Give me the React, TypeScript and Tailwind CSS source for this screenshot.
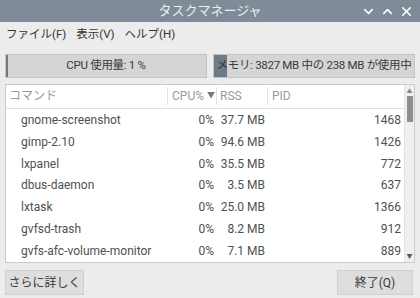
import { ChevronDown, ChevronUp, X } from 'lucide-react';

const rows = [
  { cmd: 'gnome-screenshot', cpu: '0%', rss: '37.7 MB', pid: '1468' },
  { cmd: 'gimp-2.10', cpu: '0%', rss: '94.6 MB', pid: '1426' },
  { cmd: 'lxpanel', cpu: '0%', rss: '35.5 MB', pid: '772' },
  { cmd: 'dbus-daemon', cpu: '0%', rss: '3.5 MB', pid: '637' },
  { cmd: 'lxtask', cpu: '0%', rss: '25.0 MB', pid: '1366' },
  { cmd: 'gvfsd-trash', cpu: '0%', rss: '8.2 MB', pid: '912' },
  { cmd: 'gvfs-afc-volume-monitor', cpu: '0%', rss: '7.1 MB', pid: '889' },
];

const font = { fontFamily: 'Roboto, "Noto Sans CJK JP", sans-serif' };

const UsageBar = ({ label, percent }: { label: string; percent: number }) => (
  <div className="relative flex-1 min-w-0 h-[24px] border border-[#c4c4c4] bg-[#d5d5d5] flex items-center justify-center overflow-hidden">
    <div className="absolute left-0 top-0 bottom-0 bg-[#6d7a88]" style={{ width: `${percent}%` }} />
    <span className="relative text-[11.5px] text-[#3a3a3a] whitespace-nowrap tracking-[-0.3px]">{label}</span>
  </div>
);

export default function App() {
  return (
    <div className="w-[420px] h-[298px] bg-[#ececec] flex flex-col overflow-hidden" style={font}>
      <div className="h-[22px] bg-[#7f8b98] flex items-center relative">
        <span className="flex-1 text-center text-[13px] text-white/85 whitespace-nowrap">タスクマネージャ</span>
        <div className="absolute right-[6px] top-0 h-full flex items-center gap-[4px] text-white">
          <ChevronDown size={15} strokeWidth={2.5} />
          <ChevronUp size={15} strokeWidth={2.5} />
          <X size={15} strokeWidth={2.5} />
        </div>
      </div>
      <div className="h-[24px] pt-[2px] flex items-center gap-[10px] px-[6px] text-[11.5px] text-[#333] whitespace-nowrap">
        <span>ファイル(F)</span>
        <span>表示(V)</span>
        <span>ヘルプ(H)</span>
      </div>
      <div className="flex flex-col px-[5px] pt-[8px] flex-1">
        <div className="flex gap-[6px]">
          <UsageBar label="CPU 使用量: 1 %" percent={1} />
          <UsageBar label="メモリ: 3827 MB 中の 238 MB が使用中" percent={6.5} />
        </div>
        <div className="mt-[6px] h-[179px] border border-[#cbcbcb] bg-white flex">
          <div className="flex-1 flex flex-col text-[12px] whitespace-nowrap">
            <div className="h-[24px] grid grid-cols-[162px_49px_51px_1fr] items-center border-b border-[#e2e2e2] text-[#9a9a9a]">
              <span className="pl-[3px] border-r border-[#e2e2e2]">コマンド</span>
              <span className="pl-[4px] border-r border-[#e2e2e2] flex items-center gap-[3px]">
                CPU%<span className="text-[8px] text-[#777]">▼</span>
              </span>
              <span className="pl-[3px] border-r border-[#e2e2e2]">RSS</span>
              <span className="pl-[4px]">PID</span>
            </div>
            {rows.map((r) => (
              <div key={r.cmd} className="h-[22px] grid grid-cols-[162px_49px_51px_1fr] items-center text-[#505050]">
                <span className="pl-[15px]">{r.cmd}</span>
                <span className="text-right pr-[3px]">{r.cpu}</span>
                <span className="text-right pr-[3px]">{r.rss}</span>
                <span className="text-right pr-[3px]">{r.pid}</span>
              </div>
            ))}
          </div>
          <div className="w-[10px] bg-[#efefef] border-l border-[#e2e2e2] flex flex-col items-center py-[2px]">
            <span className="text-[6px] leading-[8px] text-[#888]">▲</span>
            <div className="w-[6px] h-[26px] bg-[#8e8e8e] mt-[1px]" />
            <div className="flex-1" />
            <span className="text-[6px] leading-[8px] text-[#555]">▼</span>
          </div>
        </div>
        <div className="mt-[7px] flex justify-between">
          <button className="h-[25px] w-[79px] px-0 bg-[#dedede] border border-[#d0d0d0] text-[12px] text-[#3a3a3a] whitespace-nowrap">
            さらに詳しく
          </button>
          <button className="h-[25px] w-[76px] mr-[2px] px-0 bg-[#dedede] border border-[#d0d0d0] text-[12px] text-[#3a3a3a] whitespace-nowrap">
            終了(Q)
          </button>
        </div>
      </div>
    </div>
  );
}
